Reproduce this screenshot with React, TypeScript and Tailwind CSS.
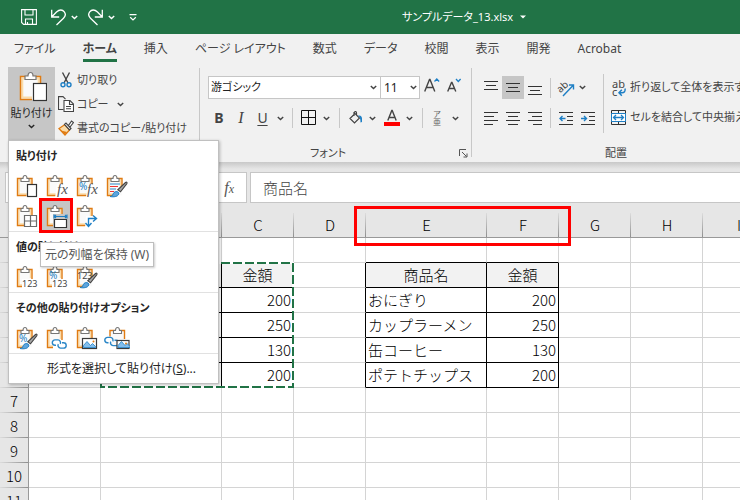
import React, { useState } from 'react';

const tabs = ["ファイル", "ホーム", "挿入", "ページ レイアウト", "数式", "データ", "校閲", "表示", "開発", "Acrobat"]

const columns = ["A", "B", "C", "D", "E", "F", "G", "H", "I"]

const items = [
  ["商品名", "金額"],
  ["おにぎり", "200"],
  ["カップラーメン", "250"],
  ["缶コーヒー", "130"],
  ["ポテトチップス", "200"],
]

function Chevron({ className = "" }: { className?: string }) {
  return (
    <svg className={`shrink-0 ${className}`} width="7" height="5" viewBox="0 0 7 5" fill="none" stroke="currentColor" strokeWidth="1.4">
      <path d="M.8 .9 3.5 3.6 6.2 .9" />
    </svg>
  );
}

function Clipboard({ children }: { children?: React.ReactNode }) {
  return (
    <svg width="22" height="24" viewBox="0 0 22 24" fill="none">
      <path d="M1.5 4.5h14.5v17H1.5z" fill="#fafafa" />
      <path d="M11 20H3V6h11.5v7" stroke="#fbdca8" strokeWidth="1.4" />
      <path d="M10.5 21.5h-9v-17h14.5V14" stroke="#e07b12" strokeWidth="1.4" />
      <path d="M5 7.5v-3h2c0-2 .8-3 2-3s2 1 2 3h2v3z" fill="#fff" stroke="#767676" strokeWidth="1.1" />
      {children}
    </svg>
  );
}

function Brush() {
  return (
    <g>
      <path d="M19.5 8.500c1.200-.8 2 .2 1.200 1.300l-6.200 8-2.700-2z" fill="#a8a8a8" stroke="#444" strokeWidth="1.1" />
      <path d="M4 22.500c3 0 2.600-2.500 4-4 2-2 5.500-.5 4.800 1.500-.8 2.600-5 3.300-8.800 2.500z" fill="#5ea5dd" stroke="#1e7fc5" strokeWidth="1" />
    </g>
  );
}

function Link({ x, y }: { x: number, y: number }) {
  return (
    <g transform={`translate(${x} ${y})`} stroke="#2a86c7" strokeWidth="1.4" fill="none">
      <path d="M4.500 6.800H3.500a2.700 2.700 0 0 1 0-5.400H6.500a2.700 2.700 0 0 1 2.200 4" />
      <path d="M10.500 4.200H12a2.700 2.700 0 0 1 0 5.400H9a2.700 2.700 0 0 1-2.200-4" />
    </g>
  );
}

function Picture({ x, y, w, h }: { x: number, y: number, w: number, h: number }) {
  return (
    <g>
      <rect x={x} y={y} width={w} height={h} fill="#fff" stroke="#3b3b3b" strokeWidth="1.2" />
      <path d={`M${x + 1} ${y + h - 1}v-2l3.500-4 3.500 4 2-2 3 3v1z`} fill="#83beec" stroke="#1e7fc5" strokeWidth=".8" />
      <circle cx={x + w - 3} cy={y + 3} r="1" fill="#e07b12" />
    </g>
  );
}

function IconText({ x, y, size, color, italic, children }: { x: number, y: number, size: number, color: string, italic?: boolean, children: string }) {
  return (
    <text x={x} y={y} fontSize={size} fill={color} fontStyle={italic ? "italic" : "normal"} fontFamily={italic ? "Liberation Serif, serif" : "Noto Sans, sans-serif"}>{children}</text>
  );
}

function PasteButton({ label, active, children }: { label: string, active?: boolean, children: React.ReactNode }) {
  return (
    <button aria-label={label} className={`flex h-[30px] w-[30px] items-center justify-center ${active ? "bg-[#c6c6c6]" : ""}`}>{children}</button>
  );
}

function PasteMenu() {
  return (
    <div className="absolute left-2 top-[73px] z-20 w-[211px] border border-[#c0c0c0] bg-white text-[11px] text-[#262626] shadow-[1px_1px_3px_rgba(0,0,0,0.25)]">
      <h3 className="h-[30px] pl-[7px] font-bold leading-[30px]">貼り付け</h3>
      <div className="relative flex flex-wrap px-[3px] pr-20">
        <PasteButton label="貼り付け">
          <Clipboard><rect x="11.500" y="10.500" width="9" height="12" fill="#fff" stroke="#333" strokeWidth="1.200" /></Clipboard>
        </PasteButton>
        <PasteButton label="数式">
          <Clipboard>
            <path d="M11 10h11v14H9z" fill="#fff" />
            <IconText x={11} y={20} size={15} color="#555" italic>fx</IconText>
          </Clipboard>
        </PasteButton>
        <PasteButton label="数式と数値の書式">
          <Clipboard>
            <path d="M12 10h10v14H10z" fill="#fff" />
            <IconText x={3} y={16} size={10} color="#1e7fc5">%</IconText>
            <IconText x={11} y={20} size={15} color="#555" italic>fx</IconText>
          </Clipboard>
        </PasteButton>
        <PasteButton label="元の書式を保持">
          <Clipboard>
            <path d="M4 10h10M4 15h6" stroke="#2a86c7" strokeWidth="1.200" />
            <path d="M4 12.500h8M4 17.500h4" stroke="#e33" strokeWidth="1.200" />
            <Brush />
          </Clipboard>
        </PasteButton>
        <div className="w-full" />
        <PasteButton label="罫線なし">
          <Clipboard>
            <path d="M8.500 11.500h12v11h-12zM14.500 11.500v11M8.500 17h12" fill="#fff" stroke="#6b6b6b" strokeWidth="1.200" />
          </Clipboard>
        </PasteButton>
        <PasteButton label="元の列幅を保持" active>
          <Clipboard>
            <path d="M7 10h15v14H7z" fill="#c6c6c6" />
            <path d="M8.500 15.500h12v8h-12z" fill="#fff" stroke="#333" strokeWidth="1.200" />
            <path d="M8.500 12.500h12M8 10.500v4M21 10.500v4M10 11l-1.500 1.500L10 14M19 11l1.500 1.500L19 14" stroke="#1e7fc5" strokeWidth="1.100" />
          </Clipboard>
        </PasteButton>
        <PasteButton label="行/列の入れ替え">
          <Clipboard>
            <path d="M10 12h12v12H9z" fill="#fff" />
            <path d="M12.500 22V14.500H20M9.500 19l3 3.500 3-3.500M17 11.500l3.500 3-3.500 3" stroke="#1e7fc5" strokeWidth="1.400" />
          </Clipboard>
        </PasteButton>
        <div className="pointer-events-none absolute left-[30px] top-[27px] h-[35px] w-[34px] border-[3px] border-[#ff0000]" />
        <div role="tooltip" className="absolute left-[31px] top-[71px] z-10 whitespace-nowrap border border-[#bebebe] bg-white px-1 text-xs leading-[23px] text-[#575757] shadow-[1px_1px_2px_rgba(0,0,0,0.2)]">元の列幅を保持 (W)</div>
      </div>
      <h3 className="h-[31px] border-t border-[#e1e1e1] pl-[7px] font-bold leading-[30px]">値の貼り付け</h3>
      <div className="flex px-[3px]">
        <PasteButton label="値">
          <Clipboard><path d="M6 14h16v10H6z" fill="#fff" /><IconText x={6} y={22} size={9} color="#444">123</IconText></Clipboard>
        </PasteButton>
        <PasteButton label="値と数値の書式">
          <Clipboard>
            <path d="M6 15h16v9H6z" fill="#fff" />
            <IconText x={3} y={14} size={10} color="#1e7fc5">%</IconText>
            <IconText x={6} y={22} size={9} color="#444">123</IconText>
          </Clipboard>
        </PasteButton>
        <PasteButton label="値と元の書式">
          <Clipboard><IconText x={1} y={14} size={9} color="#444">123</IconText><Brush /></Clipboard>
        </PasteButton>
      </div>
      <h3 className="h-[31px] border-t border-[#e1e1e1] pl-[7px] font-bold leading-[30px]">その他の貼り付けオプション</h3>
      <div className="flex px-[3px]">
        <PasteButton label="書式設定">
          <Clipboard><IconText x={3} y={16} size={10} color="#1e7fc5">%</IconText><Brush /></Clipboard>
        </PasteButton>
        <PasteButton label="リンク貼り付け">
          <Clipboard><path d="M7 14h15v10H7z" fill="#fff" /><Link x={5.5} y={12.5} /></Clipboard>
        </PasteButton>
        <PasteButton label="図">
          <Clipboard><Picture x={6.5} y={12.5} w={14} h={10} /></Clipboard>
        </PasteButton>
        <PasteButton label="リンクされた図">
          <svg width="26" height="24" viewBox="0 0 26 24" fill="none">
            <path d="M6 12V4.500h14.500V20H6z" fill="#fafafa" />
            <path d="M6 10.500v-6h14.500V13" stroke="#e07b12" strokeWidth="1.400" />
            <path d="M9.500 7.500v-3h2c0-2 .8-3 2-3s2 1 2 3h2v3z" fill="#fff" stroke="#767676" strokeWidth="1.100" />
            <Link x={0} y={10} />
            <Picture x={13} y={14.5} w={12} h={8} />
          </svg>
        </PasteButton>
      </div>
      <button className="block h-[30px] w-full whitespace-nowrap border-t border-[#e1e1e1] pl-[38px] text-left text-xs">形式を選択して貼り付け(<u>S</u>)...</button>
    </div>
  );
}

function Lines({ d }: { d: string }) {
  return (
    <svg width="14" height="14" viewBox="0 0 14 14" fill="none" stroke="#333" strokeWidth="1"><path d={d} /></svg>
  );
}

function IconButton({ label, active, children }: { label: string, active?: boolean, children: React.ReactNode }) {
  return (
    <button aria-label={label} className={`flex h-[23px] w-[22px] shrink-0 items-center justify-center ${active ? "bg-[#c6c6c6]" : ""}`}>{children}</button>
  );
}

function Divider({ className = "" }: { className?: string }) {
  return <div className={`w-px shrink-0 bg-[#c8c8c8] ${className}`} />
}

function TitleBar() {
  return (
    <header className="flex h-[34px] shrink-0 items-center bg-[#217346] text-white">
      <div className="flex w-[402px] shrink-0 items-center pl-[21px]">
        <button aria-label="上書き保存">
          <svg width="16" height="16" viewBox="0 0 16 16" fill="none" stroke="currentColor" strokeWidth="1.100">
            <path d="M.6.6h14.800v14.800H2.600l-2-2zM4 .6v5.400h8V.6M4.500 15.400V10h7v5.400M6.500 15v-2" />
          </svg>
        </button>
        <button aria-label="元に戻す" className="ml-[14px] flex items-center gap-[5px]">
          <svg width="15" height="17" viewBox="0 0 15 17" fill="none" stroke="currentColor" strokeWidth="1.300">
            <path d="M.7.8v7.200h7.500M.9 7.800 5.500 3c3-2.800 6-2.500 7.800-.2 1.600 2.200 1 4.700-.8 6.400L5.500 16" />
          </svg>
          <Chevron />
        </button>
        <button aria-label="やり直し" className="ml-[10px] flex items-center gap-[5px]">
          <svg width="15" height="17" viewBox="0 0 15 17" fill="none" stroke="currentColor" strokeWidth="1.300">
            <path d="M14.300.8v7.200H6.800M14.100 7.800 9.500 3c-3-2.800-6-2.500-7.800-.2-1.600 2.200-1 4.700.8 6.400L9.500 16" />
          </svg>
          <Chevron />
        </button>
        <button aria-label="ツールバーのカスタマイズ" className="ml-[14px]">
          <svg width="8" height="7" viewBox="0 0 8 7" fill="none" stroke="currentColor" strokeWidth="1.200"><path d="M.5.600h7M1.200 3.300 4 6l2.800-2.700" /></svg>
        </button>
      </div>
      <button className="flex items-center gap-[7px] whitespace-nowrap text-[11px]">
        サンプルデータ_13.xlsx
        <svg width="6" height="4" viewBox="0 0 6 4" fill="currentColor"><path d="M0 .5h6L3 3.500z" /></svg>
      </button>
    </header>
  );
}

function ClipboardGroup() {
  return (
    <div className="relative flex w-[199px] shrink-0 pl-2 text-[11px]">
      <button className="flex h-[74px] w-[47px] flex-col items-center bg-[#c6c6c6] pt-1 text-[#262626]">
        <svg width="30" height="32" viewBox="0 0 30 32" fill="none">
          <path d="M3.500 5.500h20v23h-20z" fill="#fafafa" />
          <path d="M15 26.500H5.300v-19h16.400V12" stroke="#fbdca8" strokeWidth="2" />
          <path d="M15 28.500H3.500v-23h20V12" stroke="#e07b12" strokeWidth="1.500" />
          <path d="M8 8.500V5h3c0-2.300 1-3.500 2.500-3.500S16 2.700 16 5h3v3.500z" fill="#fff" stroke="#767676" strokeWidth="1.200" />
          <rect x="16.500" y="12.500" width="13" height="17" fill="#fff" stroke="#333" strokeWidth="1.200" />
        </svg>
        <span className="whitespace-nowrap leading-5">貼り付け</span>
        <Chevron className="mt-px" />
      </button>
      <div className="flex flex-col pl-[3px] pt-px">
        <button className="flex h-6 items-center gap-[3px] whitespace-nowrap">
          <svg width="16" height="16" viewBox="0 0 16 16" fill="none">
            <path d="M4.500.500 10 11M11.500.500 6 11" stroke="#444" strokeWidth="1.400" />
            <circle cx="5" cy="12.800" r="2" stroke="#1e7fc5" strokeWidth="1.400" />
            <circle cx="11" cy="12.800" r="2" stroke="#1e7fc5" strokeWidth="1.400" />
          </svg>
          切り取り
        </button>
        <button className="flex h-6 items-center gap-[3px] whitespace-nowrap">
          <svg width="16" height="16" viewBox="0 0 16 16" fill="none" stroke="#444" strokeWidth="1.100">
            <path d="M5.500 13.500h-5V.600h4.500l2.500 2.500" />
            <path d="M6 4.500h6l3.500 3.500v7.500H6zM11.500 4.500v4h4M8 10.500h5M8 12.800h5" fill="#fff" />
          </svg>
          コピー
          <Chevron className="ml-[5px]" />
        </button>
        <button className="flex h-6 items-center gap-[3px] whitespace-nowrap">
          <svg width="16" height="16" viewBox="0 0 16 16" fill="none">
            <path d="M7 4.500 1 8.500 7 15l4.500-5z" fill="#fbdca8" stroke="#e07b12" strokeWidth="1.300" />
            <path d="M3 10.500 7 14.500l2-2.500z" fill="#e07b12" />
            <path d="M6.500 4.500 8 3l5 5.500-1.500 1.500zM10.500 5.500l3-4.500 2 1.500-3.500 4.500" fill="#fff" stroke="#444" strokeWidth="1.200" />
          </svg>
          書式のコピー/貼り付け
        </button>
      </div>
      <PasteMenu />
    </div>
  );
}

function FontGroup() {
  const [font, setFont] = useState("游ゴシック")
  const [size, setSize] = useState("11")

  return (
    <div className="flex w-[271px] shrink-0 flex-col pl-2 pt-[9px]">
      <div className="flex items-start">
        <div className="relative flex items-center">
          <select aria-label="フォント" value={font} onChange={(e) => setFont(e.target.value)} className="h-[23px] w-[173px] appearance-none border border-[#c6c6c6] bg-white pl-[2px] text-[11px] text-[#222]">
            <option>游ゴシック</option>
            <option>メイリオ</option>
          </select>
          <Chevron className="pointer-events-none absolute right-1" />
        </div>
        <div className="relative -ml-px flex items-center">
          <select aria-label="フォント サイズ" value={size} onChange={(e) => setSize(e.target.value)} className="h-[23px] w-10 appearance-none border border-[#c6c6c6] bg-white pl-[3px] text-xs text-[#222]">
            <option>11</option>
            <option>12</option>
          </select>
          <Chevron className="pointer-events-none absolute right-[3px]" />
        </div>
        <button aria-label="フォント サイズの拡大" className="ml-1">
          <svg width="17" height="20" viewBox="0 0 17 20" fill="none">
            <path d="M.700 15.500 5.500 3.500h.5l4.800 12M2.500 11.500h6.600" stroke="#444" strokeWidth="1.400" />
            <path d="M10.500 5.500 12.800 3l2.300 2.500" stroke="#1e7fc5" strokeWidth="1.300" />
          </svg>
        </button>
        <button aria-label="フォント サイズの縮小" className="ml-[6px]">
          <svg width="17" height="20" viewBox="0 0 17 20" fill="none">
            <path d="M.700 15.500 4.500 6.500h.5l3.800 9M2.300 12.500h5" stroke="#444" strokeWidth="1.400" />
            <path d="M9 3l2.300 2.500L13.600 3" stroke="#1e7fc5" strokeWidth="1.300" />
          </svg>
        </button>
      </div>
      <div className="mt-[7px] flex h-6 items-center text-sm leading-none">
        <button className="w-[22px] font-bold">B</button>
        <button className="w-[22px] font-['Liberation_Serif',serif] text-base italic">I</button>
        <button className="w-[21px] underline underline-offset-2">U</button>
        <Chevron className="ml-1" />
        <Divider className="ml-2 h-5" />
        <button aria-label="罫線" className="ml-2 flex items-center gap-[6px]">
          <svg width="16" height="16" viewBox="0 0 16 16" fill="none" stroke="#111" strokeWidth="1"><path d="M.5.500h14v14H.5zM7.500.500v14M.5 7.500h14" /></svg>
          <Chevron />
        </button>
        <Divider className="ml-[9px] h-5" />
        <button aria-label="塗りつぶしの色" className="ml-[9px] flex items-center gap-[6px]">
          <svg width="14" height="14" viewBox="0 0 14 14" fill="none">
            <path d="M5 1v4M1 7.500l5-5 4.500 4.500-5 5zM5 3.500C5-.5 7.500 0 7.500 2v2" stroke="#444" strokeWidth="1.200" />
            <path d="M9 4.500c3-.5 4 1 4 3V11l-1.500.5C11.500 8 11 6 9 4.500z" fill="#1e7fc5" />
          </svg>
          <Chevron />
        </button>
        <button aria-label="フォントの色" className="ml-2 flex items-center gap-[6px]">
          <svg width="16" height="18" viewBox="0 0 16 18" fill="none">
            <path d="M3.800 11.500 7.800 1.500h.4l4 10M5.200 8.500h5.600" stroke="#444" strokeWidth="1.400" />
            <path d="M0 13h16v4H0z" fill="#ff0000" />
          </svg>
          <Chevron />
        </button>
        <Divider className="ml-[9px] h-5" />
        <button className="ml-[9px] flex items-center gap-[10px] text-[#666]">
          <span className="flex w-[10px] flex-col items-center text-[8px] leading-[8px]"><span>ア</span><span>亜</span></span>
          <Chevron className="text-[#444]" />
        </button>
      </div>
      <div className="mt-auto flex h-4 items-center pl-[102px] pr-[3px] text-[11px]">
        フォント
        <button aria-label="フォントの設定" className="ml-auto">
          <svg width="9" height="9" viewBox="0 0 9 9" fill="none" stroke="#555" strokeWidth="1"><path d="M.5 7V.500H7M3 3l4.500 4.500M8 4.500V8H4.500" /></svg>
        </button>
      </div>
    </div>
  );
}

function AlignGroup() {
  return (
    <div className="flex w-[288px] shrink-0 flex-col pl-2 pt-[7px] text-[11px]">
      <div className="flex">
        <div className="flex flex-col gap-[7px] pt-[2px]">
          <div className="flex items-center">
            <IconButton label="上揃え"><Lines d="M0 .500h14M2 4.500h10M0 8.500h14" /></IconButton>
            <IconButton label="上下中央揃え" active><Lines d="M0 2.500h14M2 6.500h10M0 10.500h14" /></IconButton>
            <IconButton label="下揃え"><Lines d="M0 5.500h14M2 9.500h10M0 13.500h14" /></IconButton>
            <Divider className="mx-1 h-5" />
            <button aria-label="方向" className="flex items-center gap-1 pl-[3px]">
              <svg width="17" height="18" viewBox="0 0 17 18" fill="none" className="overflow-visible">
                <text x="0" y="12" fontSize="10" fill="#444" fontFamily="Noto Sans, sans-serif" transform="rotate(-42 4 10)">ab</text>
                <path d="M5 17 15 6.500M11 6h4.500v4.500" stroke="#1e7fc5" strokeWidth="1.400" />
              </svg>
              <Chevron />
            </button>
          </div>
          <div className="flex items-center">
            <IconButton label="左揃え"><Lines d="M0 1.500h14M0 5.500h10M0 9.500h14M0 13.500h9" /></IconButton>
            <IconButton label="中央揃え"><Lines d="M0 1.500h14M2 5.500h10M0 9.500h14M2 13.500h10" /></IconButton>
            <IconButton label="右揃え"><Lines d="M0 1.500h14M4 5.500h10M0 9.500h14M5 13.500h9" /></IconButton>
            <Divider className="mx-1 h-5" />
            <IconButton label="インデントを減らす">
              <svg width="14" height="14" viewBox="0 0 14 14" fill="none"><path d="M0 1.500h14M8 5.500h6M8 9.500h6M0 13.500h14" stroke="#333" /><path d="M6.500 7.500H1M3.500 5 1 7.500 3.500 10" stroke="#1e7fc5" strokeWidth="1.400" /></svg>
            </IconButton>
            <IconButton label="インデントを増やす">
              <svg width="14" height="14" viewBox="0 0 14 14" fill="none"><path d="M0 1.500h14M8 5.500h6M8 9.500h6M0 13.500h14" stroke="#333" /><path d="M0 7.500h5.500M3 5l2.500 2.500L3 10" stroke="#1e7fc5" strokeWidth="1.400" /></svg>
            </IconButton>
          </div>
        </div>
        <Divider className="ml-1 h-[59px]" />
        <div className="flex flex-col gap-[7px] pl-[7px] pt-[2px]">
          <button className="flex h-[23px] items-center gap-[3px] whitespace-nowrap">
            <svg width="16" height="18" viewBox="0 0 16 18" fill="none">
              <text x="1" y="9" fontSize="11" fill="#444" fontFamily="Noto Sans, sans-serif">ab</text>
              <text x="1" y="17" fontSize="11" fill="#444" fontFamily="Noto Sans, sans-serif">c</text>
              <path d="M14 9.500c.8 3-1 4.200-3 4.200H8M10.800 10.700 8 13.700l2.800 3" stroke="#1e7fc5" strokeWidth="1.500" />
            </svg>
            折り返して全体を表示する
          </button>
          <button className="flex h-[23px] items-center gap-[3px] whitespace-nowrap">
            <svg width="16" height="16" viewBox="0 0 16 16" fill="none">
              <path d="M.5.500h14v14H.5zM7.500.500v3M7.500 11.500v3" stroke="#333" />
              <path d="M.5 3.500h14v8H.5z" fill="#fff" stroke="#1e7fc5" />
              <path d="M2.500 7.500h10M5 5 2.500 7.500 5 10M10 5l2.500 2.500L10 10" stroke="#1e7fc5" strokeWidth="1.300" />
            </svg>
            セルを結合して中央揃え
          </button>
        </div>
      </div>
      <div className="mt-auto h-4 pr-2 text-center leading-4">配置</div>
    </div>
  );
}

function Sheet() {
  // B2:C6 and E2:F6 hold the same list
  const cellText = (row: number, col: string) => {
    if (row < 2 || row > 6) return ""
    if (col === "B" || col === "E") return items[row - 2][0]
    if (col === "C" || col === "F") return items[row - 2][1]
    return ""
  }
  const blackRight = (row: number, col: string) => row >= 2 && row <= 6 && "ABCDEF".includes(col)
  const blackBottom = (row: number, col: string) => row >= 1 && row <= 6 && "BCEF".includes(col)

  const cellAlign = (row: number, col: string) => {
    if (row === 2 && cellText(row, col)) return "bg-[#f2f2f2] text-center"
    return col === "C" || col === "F" ? "text-right" : "text-left"
  }

  return (
    <div className="relative min-h-0 flex-1 overflow-hidden bg-white font-['Noto_Sans_CJK_JP',sans-serif] text-[15px] font-light text-black [font-feature-settings:normal]">
      <table className="w-[774px] table-fixed border-separate border-spacing-0">
        <colgroup>
          <col className="w-[29px]" />
          {columns.map((col) => <col key={col} className={col === "B" || col === "E" ? "w-[121px]" : "w-[72px]"} />)}
        </colgroup>
        <thead>
          <tr className="h-[25px]">
            <th className="border-b border-[#999] bg-[#e6e6e6] p-0" />
            {columns.map((col) => (
              <th key={col} scope="col" className="border-b border-[#999] bg-[#e6e6e6] bg-[linear-gradient(to_bottom,#dcdcdc,#8f8f8f)] bg-[length:1px_100%] bg-right bg-no-repeat p-0 text-center font-light leading-6">{col}</th>
            ))}
          </tr>
        </thead>
        <tbody>
          {[1, 2, 3, 4, 5, 6, 7, 8, 9, 10, 11].map((row) => (
            <tr key={row} className="h-[25px]">
              <th scope="row" className="border-r border-[#999] bg-[#e6e6e6] bg-[linear-gradient(to_right,#dcdcdc,#8f8f8f)] bg-[length:100%_1px] bg-bottom bg-no-repeat p-0 text-center font-light leading-6">{row}</th>
              {columns.map((col) => (
                <td key={col} className={`whitespace-nowrap border-b border-r px-[2px] py-0 leading-6 ${blackRight(row, col) ? "border-r-black" : "border-r-[#d4d4d4]"} ${blackBottom(row, col) ? "border-b-black" : "border-b-[#d4d4d4]"} ${cellAlign(row, col)}`}>{cellText(row, col)}</td>
              ))}
            </tr>
          ))}
        </tbody>
      </table>
      {/* copied range */}
      <svg className="absolute left-[100px] top-[49px]" width="194" height="126" viewBox="0 0 194 126" fill="none" strokeWidth="2">
        <rect x="1" y="1" width="192" height="124" stroke="#fff" />
        <rect x="1" y="1" width="192" height="124" stroke="#217346" strokeDasharray="9 3" />
      </svg>
    </div>
  );
}

export default function App() {
  const [formula, setFormula] = useState("商品名")

  return (
    <div className="relative flex h-screen flex-col overflow-hidden bg-[#e6e6e6] font-['Noto_Sans','Noto_Sans_CJK_JP',sans-serif] text-[#444] [font-feature-settings:'palt']">
      <TitleBar />

      <div className="relative z-10 h-[128px] shrink-0 bg-[#f1f1f1]">
        <nav className="flex h-7 gap-[27px] pl-[14px] text-xs">
          {tabs.map((tab) => (
            <button key={tab} className={`shrink-0 whitespace-nowrap border-b-[3px] pt-[5px] leading-5 ${tab === "ホーム" ? "border-[#217346] font-bold" : "border-transparent"}`}>{tab}</button>
          ))}
        </nav>
        <div className="mt-[5px] flex h-[94px]">
          <ClipboardGroup />
          <Divider className="my-px mb-1 bg-[#b8b8b8]" />
          <FontGroup />
          <Divider className="my-px mb-1 bg-[#b8b8b8]" />
          <AlignGroup />
        </div>
      </div>

      <div className="flex shrink-0 gap-[3px] bg-[linear-gradient(to_bottom,#c8c8c8,#e6e6e6_7px)] pb-[10px] pl-[5px] pt-[10px]">
        <div className="flex h-[31px] w-[242px] shrink-0 items-center justify-end border border-[#c6c6c6] bg-white pr-3">
          <button aria-label="関数の挿入" className="font-['Liberation_Serif',serif] text-base italic leading-5 text-[#555]">f<span className="text-xs">x</span></button>
        </div>
        <input aria-label="数式バー" value={formula} onChange={(e) => setFormula(e.target.value)} className="h-[31px] min-w-0 flex-1 border border-r-0 border-[#c6c6c6] bg-white pl-3 font-['Noto_Sans_CJK_JP',sans-serif] text-[15px] font-light text-[#444] outline-none" />
      </div>

      <Sheet />

      <div className="pointer-events-none absolute left-[354px] top-[206px] h-10 w-[217px] border-[3px] border-[#ff0000]" />
    </div>
  );
}
